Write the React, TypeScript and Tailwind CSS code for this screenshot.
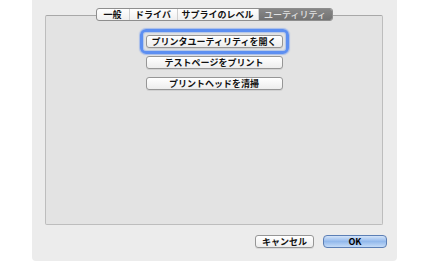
import React from "react";

const font = { fontFamily: '"Noto Sans CJK JP", "Noto Sans", sans-serif' };

function Btn({ label, w = "w-[137px]" }: { label: string; w?: string }) {
  return (
    <div
      className={`${w} h-[13px] rounded-[3px] border border-[#969696] bg-gradient-to-b from-white to-[#ededed] flex items-center justify-center text-[9px] font-bold text-[#111] leading-none shadow-[0_1px_0_rgba(0,0,0,0.08)]`}
    >
      {label}
    </div>
  );
}

export default function App() {
  const tabs = [
    { t: "一般", w: "w-[33px]" },
    { t: "ドライバ", w: "w-[48px]" },
    { t: "サプライのレベル", w: "w-[81px]" },
  ];
  return (
    <div className="w-[430px] h-[262px] bg-white flex" style={font}>
      <div className="ml-[32px] w-[365px] h-[261px] bg-[#ececec] rounded-b-[4px] flex flex-col">
        <div className="ml-[13px] mt-[15px] w-[338px] h-[210px] bg-[#e3e3e3] border border-[#bdbdbd] border-t-[#a8a8a8] rounded-[2px] flex flex-col items-center">
          <div className="-mt-[8px] flex h-[13px] rounded-[3px] border border-[#8e8e8e] bg-gradient-to-b from-white to-[#efefef] overflow-hidden">
            {tabs.map((x, i) => (
              <div
                key={i}
                className={`${x.w} h-full flex items-center justify-center text-[9px] font-bold text-[#111] leading-none border-r border-[#cfcfcf]`}
              >
                {x.t}
              </div>
            ))}
            <div className="w-[73px] h-full flex items-center justify-center text-[9px] font-medium text-[#e2e2e2] leading-none bg-gradient-to-b from-[#878787] to-[#727272]">
              ユーティリティ
            </div>
          </div>
          <div className="mt-[14px] flex flex-col items-center gap-[8px]">
            <div className="relative">
              <div className="absolute -left-[6px] -top-[6px] -right-[6px] -bottom-[6px] rounded-[6px] border-[3px] border-[#5d8ff1] shadow-[0_0_1px_1px_rgba(93,143,241,0.45),inset_0_0_1px_1px_rgba(93,143,241,0.35)]" />
              <Btn label="プリンタユーティリティを開く" />
            </div>
            <Btn label="テストページをプリント" />
            <Btn label="プリントヘッドを清掃" />
          </div>
        </div>
        <div className="mt-[10px] mr-[10px] flex justify-end gap-[9px]">
          <Btn label="キャンセル" w="w-[59px]" />
          <div className="w-[64px] h-[13px] rounded-[4px] border border-[#5c7fb5] bg-gradient-to-b from-[#d3e3f8] via-[#93b9ec] to-[#c4dbf7] flex items-center justify-center text-[9px] font-bold text-black leading-none">
            OK
          </div>
        </div>
      </div>
    </div>
  );
}
